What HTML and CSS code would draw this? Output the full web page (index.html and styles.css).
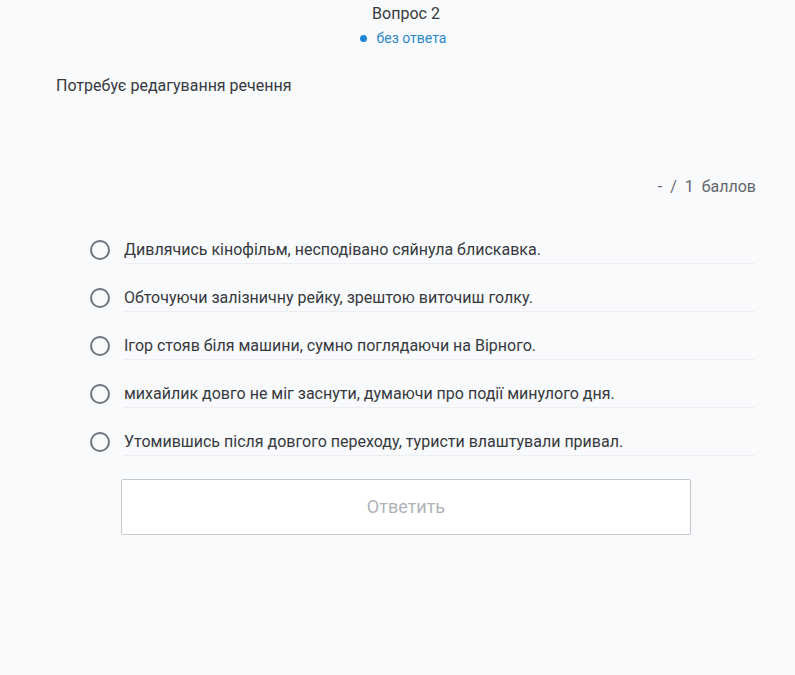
FILE: index.html
```html
<!DOCTYPE html>
<html lang="uk">
<head>
<meta charset="utf-8">
<link rel="stylesheet" href="styles.css">
</head>
<body>
<div class="page">
  <header class="head">
    <div class="title">Вопрос 2</div>
    <div class="status"><span class="dot"></span>без ответа</div>
  </header>
  <div class="question">Потребує редагування речення</div>
  <div class="score">-&nbsp; /&nbsp; 1&nbsp; баллов</div>
  <ul class="options">
    <li class="option"><span class="radio"></span><span class="label">Дивлячись кінофільм, несподівано сяйнула блискавка.</span></li>
    <li class="option"><span class="radio"></span><span class="label">Обточуючи залізничну рейку, зрештою виточиш голку.</span></li>
    <li class="option"><span class="radio"></span><span class="label">Ігор стояв біля машини, сумно поглядаючи на Вірного.</span></li>
    <li class="option"><span class="radio"></span><span class="label">михайлик довго не міг заснути, думаючи про події минулого дня.</span></li>
    <li class="option"><span class="radio"></span><span class="label">Утомившись після довгого переходу, туристи влаштували привал.</span></li>
  </ul>
  <div class="actions"><button class="submit" type="button">Ответить</button></div>
</div>
</body>
</html>
```
FILE: styles.css
```css
html, body {
  margin: 0;
  padding: 0;
  background: #f9fafc;
}
body {
  font-family: Roboto, "Liberation Sans", sans-serif;
  color: #36393e;
}
.page {
  width: 795px;
  height: 675px;
  box-sizing: border-box;
  padding: 4px 39px 0 56px;
}
.head {
  display: flex;
  flex-direction: column;
  align-items: center;
}
.title {
  font-size: 16px;
  line-height: 20px;
  color: #36393e;
}
.status {
  display: flex;
  align-items: center;
  font-size: 14px;
  line-height: 20px;
  color: #2b87c8;
  margin-top: 4px;
  margin-left: -6px;
}
.dot {
  width: 7px;
  height: 7px;
  border-radius: 50%;
  background: #1f85d6;
  margin-right: 10px;
}
.question {
  margin-top: 28px;
  font-size: 16px;
  line-height: 20px;
  color: #36393e;
}
.score {
  margin-top: 81px;
  text-align: right;
  font-size: 16px;
  line-height: 20px;
  color: #62666c;
}
.options {
  list-style: none;
  margin: 39px 0 0 0;
  padding: 0 1px 0 34px;
}
.option {
  display: flex;
  align-items: flex-start;
  height: 48px;
}
.radio {
  flex: none;
  width: 16px;
  height: 16px;
  border: 2px solid #6e767e;
  border-radius: 50%;
  margin-top: 4px;
  margin-right: 14px;
}
.label {
  flex: 1;
  font-size: 16px;
  line-height: 20px;
  padding-top: 4px;
  padding-bottom: 3px;
  border-bottom: 1px solid #eceef2;
  color: #36393e;
}
.actions {
  padding-left: 65px;
  margin-top: 3px;
}
.submit {
  display: block;
  width: 570px;
  height: 56px;
  background: #fff;
  border: 1px solid #c4c7cc;
  border-radius: 2px;
  font-family: Roboto, "Liberation Sans", sans-serif;
  font-size: 18px;
  color: #aeb3b9;
  padding: 0 0 2px 0;
}
```
